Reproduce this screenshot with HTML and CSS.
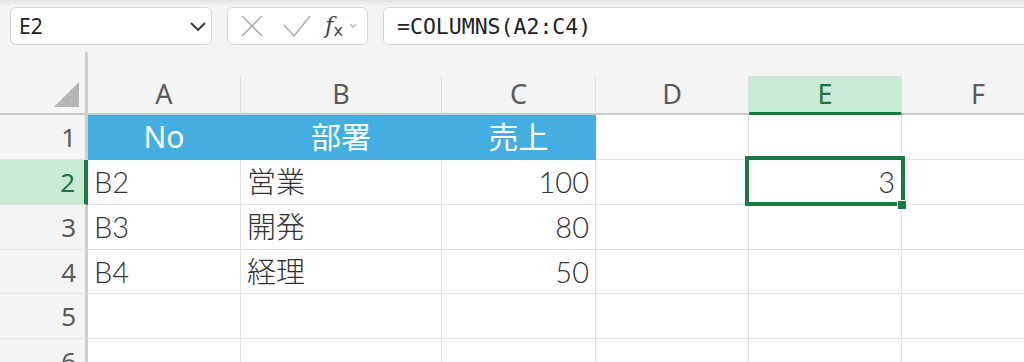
FILE: index.html
```html
<!DOCTYPE html>
<html>
	<head>
		<meta charset="UTF-8">
		<title>COLUMNS</title>
		<link rel="stylesheet" href="styles.css">
	</head>
	<body>
		<div class="toolbar">
			<div class="namebox">
				<span>E2</span>
				<svg class="chev" width="16" height="9" viewBox="0 0 16 9"><polyline points="1,1 8,8 15,1" fill="none" stroke="#333" stroke-width="1.8"/></svg>
			</div>
			<div class="fxbox">
				<svg class="ico" width="22" height="22" viewBox="0 0 22 22"><path d="M1 1 L21 21 M21 1 L1 21" stroke="#b0b0b0" stroke-width="1.6" fill="none"/></svg>
				<svg class="ico chk" width="28" height="23" viewBox="0 0 28 23"><polyline points="1,10 11,21 27,1" fill="none" stroke="#b0b0b0" stroke-width="1.6"/></svg>
				<span class="fx"><i>f</i><sub>x</sub></span>
				<svg class="mini" width="8" height="6" viewBox="0 0 8 6"><polyline points="1,1 4,4.5 7,1" fill="none" stroke="#b8b8b8" stroke-width="1.2"/></svg>
			</div>
			<div class="formula">=COLUMNS(A2:C4)</div>
		</div>

		<div class="sheet">
			<div class="corner"><span class="tri"></span></div>
			<div class="gap"></div>
			<div class="ch">A</div>
			<div class="ch">B</div>
			<div class="ch">C</div>
			<div class="ch">D</div>
			<div class="ch on">E</div>
			<div class="ch">F</div>

			<div class="rh">1</div>
			<div class="c hd">No</div>
			<div class="c hd">部署</div>
			<div class="c hd">売上</div>
			<div class="c"></div>
			<div class="c"></div>
			<div class="c"></div>

			<div class="rh on">2</div>
			<div class="c">B2</div>
			<div class="c">営業</div>
			<div class="c num">100</div>
			<div class="c"></div>
			<div class="c num sel">3<div class="selbox"></div><div class="handle"></div></div>
			<div class="c"></div>

			<div class="rh">3</div>
			<div class="c">B3</div>
			<div class="c">開発</div>
			<div class="c num">80</div>
			<div class="c"></div>
			<div class="c"></div>
			<div class="c"></div>

			<div class="rh">4</div>
			<div class="c">B4</div>
			<div class="c">経理</div>
			<div class="c num">50</div>
			<div class="c"></div>
			<div class="c"></div>
			<div class="c"></div>

			<div class="rh">5</div>
			<div class="c"></div>
			<div class="c"></div>
			<div class="c"></div>
			<div class="c"></div>
			<div class="c"></div>
			<div class="c"></div>

			<div class="rh">6</div>
			<div class="c"></div>
			<div class="c"></div>
			<div class="c"></div>
			<div class="c"></div>
			<div class="c"></div>
			<div class="c"></div>
		</div>
	</body>
</html>
```

FILE: styles.css
```css
* {
	margin: 0;
	padding: 0;
	box-sizing: border-box;
}

body {
	width: 1024px;
	height: 362px;
	overflow: hidden;
	background: #f4f4f4;
	font-family: "Noto Sans", "Noto Sans CJK JP", sans-serif;
	color: #222;
}

/* formula bar */
.toolbar {
	height: 52px;
	display: flex;
	align-items: flex-start;
	gap: 15px;
	padding: 7px 0 0 10px;
	background: linear-gradient(#e2e2e2, #f4f4f4 6px);
}

.namebox, .fxbox, .formula {
	height: 38px;
	background: #fff;
	border: 1px solid #d6d6d6;
	border-radius: 6px;
	display: flex;
	align-items: center;
}

.namebox {
	width: 202px;
	padding: 0 5px 0 8px;
	justify-content: space-between;
	font-size: 21px;
	color: #222;
}

.fxbox {
	width: 141px;
	padding-left: 13px;
}

.fxbox .ico {
	margin-right: 20px;
}

.fxbox .chk {
	margin-right: 14px;
}

.fx {
	font-family: "DejaVu Serif", serif;
	font-size: 23px;
	color: #444;
	line-height: 1;
}

.fx sub {
	font-family: "DejaVu Sans", sans-serif;
	font-size: 16px;
	vertical-align: -3px;
}

.mini {
	margin-left: 6px;
}

.formula {
	flex: 1;
	margin-right: -10px;
	padding-left: 13px;
	font-family: "DejaVu Sans Mono", monospace;
	font-size: 21.5px;
	color: #222;
}

/* grid */
.sheet {
	display: grid;
	grid-template-columns: 88px 153px 201px 154px 153px 153px 153px;
	grid-template-rows: 24px 39px 45px 45px 45px 44px 45px 45px;
}

.corner {
	grid-row: 1 / span 2;
	border-right: 3px solid #cfcfcf;
	border-bottom: 2px solid #c9c9c9;
	position: relative;
}

.tri {
	position: absolute;
	right: 6px;
	bottom: 6px;
	width: 0;
	height: 0;
	border-left: 25px solid transparent;
	border-bottom: 25px solid #b6b6b6;
}

.gap {
	grid-column: 2 / -1;
}

.ch {
	border-right: 1px solid #dedede;
	border-bottom: 2px solid #c9c9c9;
	text-align: center;
	font-size: 27px;
	line-height: 36px;
	color: #5a5a5a;
}

.ch.on {
	background: #caead8;
	color: #1b7343;
	border-bottom: 3px solid #1b7a44;
}

.rh {
	background: #f4f4f4;
	border-right: 3px solid #cfcfcf;
	border-bottom: 1px solid #e2e2e2;
	text-align: right;
	padding-right: 9px;
	font-size: 26px;
	line-height: 44px;
	color: #5a5a5a;
}

.rh.on {
	background: #caead8;
	color: #1b7343;
	border-right: 4px solid #1b7a44;
}

.c {
	background: #fff;
	border-right: 1px solid #e1e1e1;
	border-bottom: 1px solid #e1e1e1;
	padding: 0 6px;
	font-family: "Lato", "Noto Sans CJK JP", sans-serif;
	font-size: 29px;
	font-weight: 300;
	line-height: 44px;
	color: #333;
	white-space: nowrap;
}

.c.hd {
	background: #45aee1;
	border-right-color: #45aee1;
	border-bottom-color: #45aee1;
	color: #fff;
	font-family: "Noto Sans", "Noto Sans CJK JP", sans-serif;
	font-weight: 400;
	font-size: 30px;
	text-align: center;
}

.num {
	text-align: right;
}

.sel {
	position: relative;
}

.selbox {
	position: absolute;
	left: -4px;
	top: -4px;
	right: -4px;
	bottom: -2px;
	border: 4px solid #1b7a44;
}

.handle {
	position: absolute;
	right: -6px;
	bottom: -6px;
	width: 10px;
	height: 10px;
	background: #1b7a44;
	border: 1px solid #fff;
}
```
